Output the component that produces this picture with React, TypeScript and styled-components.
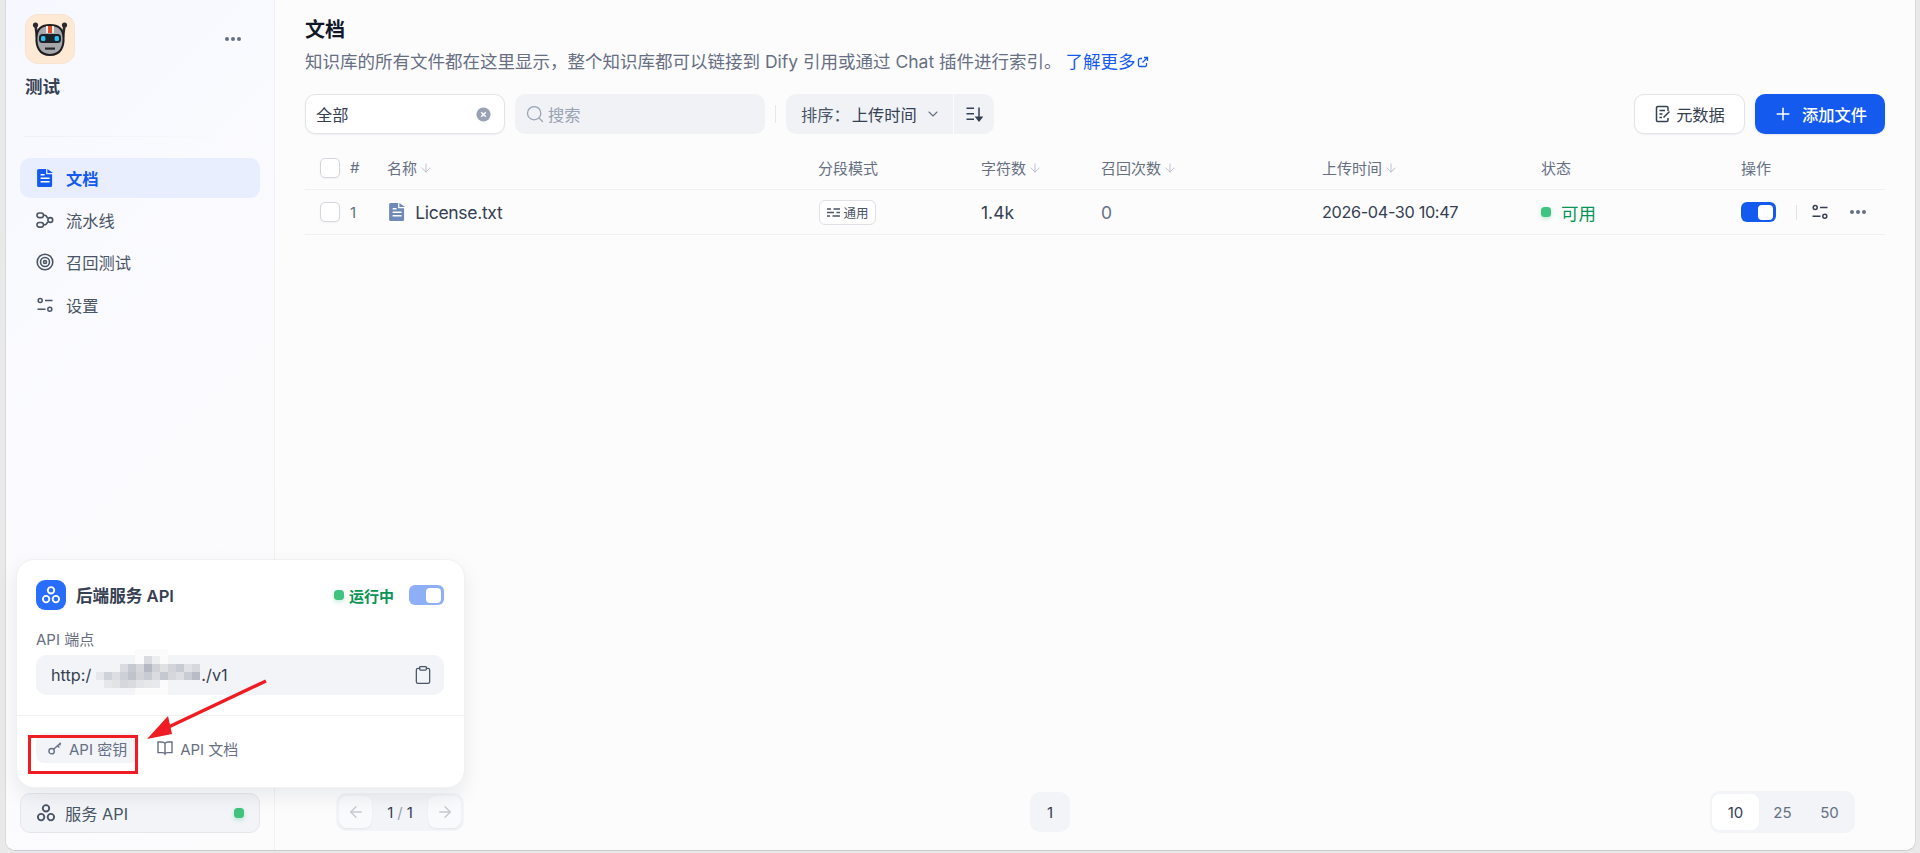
import React from "react";
import styled, { createGlobalStyle } from "styled-components";
import { ArrowDown, ArrowLeft, ArrowRight, ChevronDown, Clipboard, Plus, Search } from "lucide-react";

const GlobalStyle = createGlobalStyle`
  html, body {
    margin: 0;
    height: 100%;
    overflow: hidden;
    background: #e9e9ea;
  }
  * { box-sizing: border-box; }
  body {
    font-family: Inter, "Noto Sans CJK SC", sans-serif;
    color: #354052;
  }
`;

const Shell = styled.div`
  position: relative;
  width: 1920px;
  height: 853px;
  padding: 0 4px 2px 5px;
`;

const Frame = styled.div`
  display: flex;
  height: 100%;
  background: #fcfcfd;
  border-left: 1px solid #d8d9db;
  border-right: 1px solid #d8d9db;
  border-bottom: 1px solid #c9cacc;
  border-radius: 0 0 10px 10px;
  overflow: hidden;
`;

const Sidebar = styled.aside`
  width: 269px;
  flex-shrink: 0;
  display: flex;
  flex-direction: column;
  padding: 14px 14px 17px;
  border-right: 1px solid #f0f1f3;
  background: linear-gradient(135deg, #f7f8ff 0%, #fbfbfe 55%, #fcfcfd 100%);
`;

const AppHead = styled.div`
  display: flex;
  justify-content: space-between;
  padding-left: 5px;
`;

const Logo = styled.div`
  width: 50px;
  height: 50px;
  border-radius: 13px;
  border: 1px solid #f7e3cf;
  background: #fee9d4;
  display: flex;
  align-items: center;
  justify-content: center;
`;

const MoreBtn = styled.div`
  display: flex;
  gap: 2px;
  margin: 23px 19px 0 0;
`;

const Dot = styled.i`
  width: 4px;
  height: 4px;
  border-radius: 50%;
  background: #676f83;
`;

const AppName = styled.div`
  margin: 13px 0 0 5px;
  font-size: 17.5px;
  line-height: 20px;
  font-weight: 700;
  color: #354052;
`;

const SideRule = styled.div`
  margin: 39px 30px 21px 5px;
  height: 1px;
  background: linear-gradient(90deg, #eff0f3, rgba(239, 240, 243, 0));
`;

const Nav = styled.nav`
  display: flex;
  flex-direction: column;
  gap: 2.2px;
`;

const NavItem = styled.div<{ $active?: boolean }>`
  height: 40px;
  display: flex;
  align-items: center;
  gap: 12px;
  padding-left: 16px;
  border-radius: 10px;
  font-size: 16.25px;
  font-weight: ${(p) => (p.$active ? 600 : 400)};
  color: ${(p) => (p.$active ? "#155aef" : "#495464")};
  background: ${(p) => (p.$active ? "#e8eefd" : "transparent")};
`;

const NavIcon = styled.span`
  width: 18px;
  display: inline-flex;
  justify-content: center;
`;

const ServiceBtn = styled.div`
  margin-top: auto;
  height: 40px;
  display: flex;
  align-items: center;
  gap: 9px;
  padding: 0 15px;
  border: 1px solid #e4e6ea;
  border-radius: 10px;
  background: #f2f4f7;
  font-size: 16.25px;
  color: #495464;
`;

const Grow = styled.span`
  flex: 1;
`;

const StatusDot = styled.i`
  width: 10px;
  height: 10px;
  border-radius: 3.5px;
  background: #3fc37f;
  box-shadow: 0 2px 4px rgba(23, 178, 106, 0.25);
  flex-shrink: 0;
`;

const Main = styled.main`
  flex: 1;
  min-width: 0;
  display: flex;
  flex-direction: column;
  padding: 0 30px 17px 30px;
`;

const Title = styled.h1`
  margin: 18px 0 0;
  font-size: 20px;
  line-height: 24px;
  font-weight: 700;
  color: #101828;
`;

const Subtitle = styled.p`
  margin: 9px 0 0;
  font-size: 17.5px;
  line-height: 22px;
  color: #676f83;
  display: flex;
  align-items: center;
`;

const LearnMore = styled.span`
  color: #155aef;
  margin-left: 4px;
  display: inline-flex;
  align-items: center;
  gap: 1px;
`;

const Toolbar = styled.div`
  display: flex;
  align-items: center;
  margin-top: 21px;
  height: 40px;
`;

const FilterBox = styled.div`
  width: 200px;
  height: 40px;
  display: flex;
  align-items: center;
  justify-content: space-between;
  padding: 0 13px 0 10px;
  background: #fff;
  border: 1px solid #e2e4e8;
  border-radius: 10px;
  box-shadow: 0 1px 2px rgba(16, 24, 40, 0.05);
  font-size: 16.25px;
  color: #354052;
`;

const SearchBox = styled.div`
  width: 250px;
  height: 40px;
  margin-left: 10px;
  display: flex;
  align-items: center;
  gap: 3px;
  padding-left: 10px;
  border-radius: 10px;
  background: #f0f2f6;
  font-size: 16.25px;
  color: #98a2b2;
`;

const ToolSep = styled.div`
  width: 1px;
  height: 18px;
  margin: 0 10px;
  background: #e5e7eb;
`;

const SortGroup = styled.div`
  width: 208px;
  height: 40px;
  display: flex;
  border-radius: 10px;
  overflow: hidden;
  background: #f0f2f6;
`;

const SortLabel = styled.div`
  flex: 1;
  display: flex;
  align-items: center;
  padding-left: 15px;
  font-size: 16.25px;
  color: #495464;
  border-right: 1px solid #fcfcfd;
  white-space: nowrap;
`;

const SortValue = styled.span`
  margin-left: 2px;
  color: #354052;
`;

const SortChevron = styled(ChevronDown)`
  margin-left: 8px;
`;

const SortIcon = styled.div`
  width: 40px;
  display: flex;
  align-items: center;
  justify-content: center;
`;

const ToolActions = styled.div`
  margin-left: auto;
  display: flex;
  gap: 10px;
`;

const MetaBtn = styled.div`
  width: 111px;
  height: 40px;
  display: flex;
  align-items: center;
  justify-content: center;
  gap: 4px;
  background: #fff;
  border: 1px solid #e2e4e8;
  border-radius: 10px;
  box-shadow: 0 1px 2px rgba(16, 24, 40, 0.05);
  font-size: 16.25px;
  color: #354052;
`;

const AddBtn = styled.div`
  width: 130px;
  height: 40px;
  display: flex;
  align-items: center;
  justify-content: center;
  gap: 9px;
  background: #155aef;
  border-radius: 10px;
  box-shadow: 0 1px 2px rgba(16, 24, 40, 0.1);
  font-size: 16.25px;
  font-weight: 500;
  color: #fff;
`;

const columns = "45px 37px 431px 163px 120px 221px 219px 200px 144px";

const HeadRow = styled.div`
  display: grid;
  grid-template-columns: ${columns};
  align-items: center;
  margin-top: 13px;
  height: 43px;
  padding-bottom: 1px;
  border-bottom: 1px solid #f0f1f3;
  font-size: 15px;
  color: #676f83;
`;

const BodyRow = styled.div`
  display: grid;
  grid-template-columns: ${columns};
  align-items: center;
  height: 45px;
  border-bottom: 1px solid #f0f1f3;
  font-size: 17.5px;
  color: #354052;
`;

const CheckCell = styled.div`
  padding-left: 15px;
`;

const Checkbox = styled.div`
  width: 20px;
  height: 20px;
  border: 1px solid #d4d7dd;
  border-radius: 5px;
  background: #fff;
  box-shadow: 0 1px 2px rgba(16, 24, 40, 0.05);
`;

const HeadCell = styled.div`
  display: flex;
  align-items: center;
  gap: 2px;
  white-space: nowrap;
`;

const IndexCell = styled.div`
  font-size: 15px;
  color: #676f83;
`;

const NameCell = styled.div`
  display: flex;
  align-items: center;
  gap: 10px;
  padding-left: 2px;
  letter-spacing: -0.3px;
`;

const ModeBadge = styled.div`
  width: 57px;
  height: 25px;
  margin-left: 1px;
  display: flex;
  align-items: center;
  justify-content: center;
  gap: 2px;
  background: #fff;
  border: 1px solid #dfe1e6;
  border-radius: 6px;
  font-size: 12.5px;
  color: #495464;
`;

const CountCell = styled.div<{ $muted?: boolean }>`
  color: ${(p) => (p.$muted ? "#676f83" : "#354052")};
`;

const DateCell = styled.div`
  font-size: 16.25px;
  letter-spacing: -0.35px;
`;

const StateCell = styled.div`
  display: flex;
  align-items: center;
  gap: 10px;
  color: #079455;
`;

const ActionCell = styled.div`
  display: flex;
  align-items: center;
`;

const Toggle = styled.div<{ $dim?: boolean }>`
  width: 35px;
  height: 20px;
  flex-shrink: 0;
  display: flex;
  align-items: center;
  justify-content: flex-end;
  padding-right: 3px;
  border-radius: 6px;
  background: ${(p) => (p.$dim ? "#8eaef6" : "#155aef")};
`;

const Thumb = styled.i`
  width: 15px;
  height: 15px;
  border-radius: 4px;
  background: #fff;
`;

const ActionSep = styled.div`
  width: 1px;
  height: 15px;
  margin: 0 15px 0 20px;
  background: #e1e3e7;
`;

const RowMore = styled(MoreBtn)`
  margin: 0 0 0 22px;
`;

const Pager = styled.div`
  margin-top: auto;
  display: flex;
  align-items: center;
`;

const PrevNext = styled.div`
  width: 128px;
  height: 38px;
  margin-left: 31px;
  display: flex;
  align-items: center;
  justify-content: space-between;
  padding: 0 3px;
  border-radius: 10px;
  background: #f2f4f7;
  font-size: 15px;
  color: #354052;
`;

const PageArrow = styled.div`
  width: 33px;
  height: 32px;
  display: flex;
  align-items: center;
  justify-content: center;
  border-radius: 8px;
  background: #f9fafb;
  box-shadow: 0 1px 2px rgba(16, 24, 40, 0.06);
`;

const Slash = styled.span`
  color: #98a2b2;
  margin: 0 4px;
`;

const PageOne = styled.div`
  width: 40px;
  height: 40px;
  margin-left: 566px;
  display: flex;
  align-items: center;
  justify-content: center;
  border-radius: 10px;
  background: #f2f4f7;
  font-size: 15px;
  color: #354052;
`;

const SizeGroup = styled.div`
  margin-left: auto;
  margin-right: 30px;
  width: 145px;
  height: 42px;
  display: flex;
  align-items: center;
  padding: 0 2px;
  border-radius: 10px;
  background: #f2f4f7;
`;

const SizeItem = styled.div<{ $active?: boolean }>`
  flex: 1;
  height: 36px;
  display: flex;
  align-items: center;
  justify-content: center;
  border-radius: 8px;
  font-size: 15px;
  color: ${(p) => (p.$active ? "#354052" : "#676f83")};
  background: ${(p) => (p.$active ? "#fff" : "transparent")};
`;

const Popup = styled.section`
  position: absolute;
  left: 16px;
  top: 559px;
  width: 449px;
  height: 229px;
  display: flex;
  flex-direction: column;
  background: #fff;
  border-radius: 18px;
  border: 1px solid #f0f1f3;
  box-shadow: 0 8px 20px rgba(16, 24, 40, 0.08);
  z-index: 2;
`;

const PopupBody = styled.div`
  padding: 20px 20px 20px 19px;
  border-bottom: 1px solid #f0f1f3;
`;

const PopupHead = styled.div`
  display: flex;
  align-items: center;
`;

const ServiceIcon = styled.div`
  width: 30px;
  height: 30px;
  border-radius: 9px;
  background: #296dff;
  display: flex;
  align-items: center;
  justify-content: center;
`;

const PopupTitle = styled.div`
  margin-left: 10px;
  flex: 1;
  font-size: 16.6px;
  font-weight: 600;
  color: #354052;
`;

const Running = styled.div`
  display: flex;
  align-items: center;
  gap: 5px;
  margin-right: 15px;
  font-size: 15px;
  font-weight: 600;
  color: #079455;
`;

const FieldLabel = styled.div`
  margin-top: 20px;
  font-size: 15px;
  line-height: 20px;
  color: #676f83;
`;

const Endpoint = styled.div`
  position: relative;
  margin-top: 5px;
  height: 40px;
  display: flex;
  align-items: center;
  justify-content: space-between;
  padding: 0 11px 0 15px;
  border-radius: 10px;
  background: #f2f4f7;
  font-size: 16.25px;
  color: #354052;
`;

const HiddenHost = styled.span`
  display: inline-block;
  width: 110px;
`;

const Mosaic = styled.svg`
  position: absolute;
  left: 54px;
  top: -6px;
`;

const PopupFoot = styled.div`
  display: flex;
  align-items: center;
  gap: 6px;
  padding: 17px 19px 0;
`;

const FootBtn = styled.div<{ $hover?: boolean }>`
  height: 30px;
  display: flex;
  align-items: center;
  gap: 7px;
  padding: 0 12px;
  border-radius: 8px;
  font-size: 15px;
  color: #676f83;
  background: ${(p) => (p.$hover ? "#f2f4f7" : "transparent")};
`;

const RedBox = styled.div`
  position: absolute;
  left: 28px;
  top: 735px;
  width: 110px;
  height: 39px;
  border: 3px solid #ef1c24;
  z-index: 3;
`;

const RedArrow = styled.svg`
  position: absolute;
  left: 140px;
  top: 670px;
  z-index: 3;
`;

const ServiceGlyph = ({ size, color }: { size: number; color: string }) => (
  <svg width={size} height={size} viewBox="0 0 18 18" fill="none" stroke={color} strokeWidth="1.7">
    <circle cx="9" cy="4.8" r="2.9" />
    <circle cx="4.6" cy="12.7" r="2.9" />
    <circle cx="13.4" cy="12.7" r="2.9" />
  </svg>
);

const DocGlyph = ({ color, size = 18 }: { color: string; size?: number }) => (
  <svg width={size * 0.9} height={size} viewBox="0 0 16 18" fill={color}>
    <path d="M1.5 0H9v5.2h6V16.5a1.5 1.5 0 0 1-1.5 1.5h-12A1.5 1.5 0 0 1 0 16.5v-15A1.5 1.5 0 0 1 1.5 0Z" />
    <path d="M10.3 0 16 4h-5.7Z" />
    <path d="M3.5 8.5h9v1.5h-9ZM3.5 12h9v1.5h-9ZM3.5 5h4v1.5h-4Z" fill="#fff" />
  </svg>
);

const SettingsGlyph = ({ color = "#495464" }: { color?: string }) => (
  <svg width="16" height="16" viewBox="0 0 16 16" fill="none" stroke={color} strokeWidth="1.5">
    <circle cx="3.2" cy="3.6" r="2" />
    <circle cx="12.8" cy="12.2" r="2" />
    <path d="M8 3.6h7.5M0.5 12.2h8" />
  </svg>
);

const PipelineGlyph = () => (
  <svg width="18" height="18" viewBox="0 0 18 18" fill="none" stroke="#495464" strokeWidth="1.6">
    <rect x="1" y="2" width="6.5" height="4.6" rx="2.3" />
    <rect x="1" y="11.5" width="6.5" height="4.6" rx="2.3" />
    <circle cx="14.3" cy="9" r="2.4" />
    <path d="M7.5 4.3h1.2c1.2 0 2 .8 3 3M7.5 13.8h1.2c1.2 0 2-.8 3-3" />
  </svg>
);

const TargetGlyph = () => (
  <svg width="18" height="18" viewBox="0 0 18 18" fill="none" stroke="#495464" strokeWidth="1.6">
    <circle cx="9" cy="9" r="7.8" />
    <circle cx="9" cy="9" r="4.5" />
    <circle cx="9" cy="9" r="1.5" />
  </svg>
);

const KeyGlyph = () => (
  <svg width="14" height="14" viewBox="0 0 14 14" fill="none" stroke="#676f83" strokeWidth="1.4">
    <circle cx="3.6" cy="10.2" r="2.7" />
    <path d="M5.6 8.3 12.8 1.8M9.6 4.7l1.7 1.7M11.4 3.1l1.2 1.2" />
  </svg>
);

const BookGlyph = () => (
  <svg width="16" height="16" viewBox="0 0 16 16" fill="none" stroke="#676f83" strokeWidth="1.4">
    <path d="M8 3.4C7.2 2.4 6.2 2 5 2H1v10.6h4.6c1.2 0 2 .5 2.4 1.4.4-.9 1.2-1.4 2.4-1.4H15V2h-4c-1.2 0-2.2.4-3 1.4ZM8 3.4V14" />
  </svg>
);

const RobotLogo = () => (
  <svg width="36" height="36" viewBox="0 0 36 36">
    <circle cx="3.5" cy="4" r="2.6" fill="#2a2a2e" />
    <circle cx="32.5" cy="4" r="2.6" fill="#2a2a2e" />
    <path d="M3.5 4 5 16M32.5 4 31 16" stroke="#2a2a2e" strokeWidth="2.6" />
    <path d="M18 4c8 0 13 4 13.5 12 .6 9-2.5 18-13.5 18S3.9 25 4.5 16C5 8 10 4 18 4Z" fill="#a5a7ab" stroke="#1e1e22" strokeWidth="2" />
    <rect x="14" y="5" width="8" height="7" fill="#eceded" />
    <rect x="16" y="5" width="4" height="7" fill="#e4481f" />
    <rect x="7" y="13" width="22" height="9" rx="3.5" fill="#1c2029" />
    <rect x="9" y="15" width="4.4" height="5" rx="1.5" fill="#2bc2ee" />
    <rect x="22.6" y="15" width="4.4" height="5" rx="1.5" fill="#2bc2ee" />
    <rect x="13" y="26.5" width="10" height="2.2" fill="#26282d" />
  </svg>
);

// blurred host name, 8px blocks; x/y are where each run starts inside the svg
const mosaicRows: [number, number, string[]][] = [
  [54, 7, ["#d9dbe1", "#eceef0"]],
  [30, 15, ["#d9dbe0", "#c6c9d1", "#d5d7dd", "#b5b9c3", "#d0d2d8", "#dfe1e5", "#d2d4da", "#c9cbd3", "#dfe1e6", "#d6d8de"]],
  [6, 23, ["#e5e7ea", "#d0d2d9", "#dcdee2", "#cdd0d7", "#c0c3cc", "#d1d3d9", "#c8cbd2", "#d9dbe0", "#c5c8d0", "#d5d7dd", "#dcdee3", "#c9ccd3", "#b9bcc6"]],
  [14, 31, ["#e6e7ea", "#e2e3e7", "#d5d7dc", "#d9dbdf", "#e2e4e7", "#e6e8ea", "#e8e9ec"]],
];

export default function App() {
  const sortArrow = <ArrowDown size={14} color="#b6bcc7" strokeWidth={1.5} />;
  return (
    <>
      <GlobalStyle />
      <Shell>
        <Frame>
          <Sidebar>
            <AppHead>
              <Logo>
                <RobotLogo />
              </Logo>
              <MoreBtn>
                <Dot />
                <Dot />
                <Dot />
              </MoreBtn>
            </AppHead>
            <AppName>测试</AppName>
            <SideRule />
            <Nav>
              <NavItem $active>
                <NavIcon>
                  <DocGlyph color="#155aef" />
                </NavIcon>
                文档
              </NavItem>
              <NavItem>
                <PipelineGlyph />
                流水线
              </NavItem>
              <NavItem>
                <TargetGlyph />
                召回测试
              </NavItem>
              <NavItem>
                <NavIcon>
                  <SettingsGlyph />
                </NavIcon>
                设置
              </NavItem>
            </Nav>
            <ServiceBtn>
              <ServiceGlyph size={20} color="#495464" />
              服务 API
              <Grow />
              <StatusDot />
            </ServiceBtn>
          </Sidebar>
          <Main>
            <Title>文档</Title>
            <Subtitle>
              知识库的所有文件都在这里显示，整个知识库都可以链接到 Dify 引用或通过 Chat 插件进行索引。
              <LearnMore>
                了解更多
                <svg width="12" height="12" viewBox="0 0 12 12" fill="none" stroke="#155aef" strokeWidth="1.3">
                  <path d="M5 2.5H2.8a1.3 1.3 0 0 0-1.3 1.3v5.4A1.3 1.3 0 0 0 2.8 10.5h5.4a1.3 1.3 0 0 0 1.3-1.3V7M7 1.5h3.5V5M10.3 1.7 5.5 6.5" />
                </svg>
              </LearnMore>
            </Subtitle>
            <Toolbar>
              <FilterBox>
                全部
                <svg width="15" height="15" viewBox="0 0 15 15">
                  <circle cx="7.5" cy="7.5" r="7" fill="#98a2b2" />
                  <path d="M5.2 5.2l4.6 4.6M9.8 5.2l-4.6 4.6" stroke="#fff" strokeWidth="1.4" />
                </svg>
              </FilterBox>
              <SearchBox>
                <Search size={20} color="#98a2b2" strokeWidth={1.5} />
                搜索
              </SearchBox>
              <ToolSep />
              <SortGroup>
                <SortLabel>
                  排序：
                  <SortValue>上传时间</SortValue>
                  <SortChevron size={16} color="#676f83" strokeWidth={1.6} />
                </SortLabel>
                <SortIcon>
                  <svg width="18" height="18" viewBox="0 0 18 18" fill="none" stroke="#354052" strokeWidth="1.5">
                    <path d="M1.5 3.2h7.5M1.5 8.7h7.5M1.5 14.2h7.5M14 2.5v12.5" />
                    <path d="M11.2 12.2h5.6L14 15.8Z" fill="#354052" />
                  </svg>
                </SortIcon>
              </SortGroup>
              <ToolActions>
                <MetaBtn>
                  <svg width="18" height="18" viewBox="0 0 18 18" fill="none" stroke="#354052" strokeWidth="1.5">
                    <path d="M14 6V2.8A1.3 1.3 0 0 0 12.7 1.5H3.8a1.3 1.3 0 0 0-1.3 1.3v12.4a1.3 1.3 0 0 0 1.3 1.3h8.9a1.3 1.3 0 0 0 1.3-1.3V13" />
                    <path d="M5.5 5.5h5.5M5.5 9h3M5.5 12.5h2.5M9.5 12.5l6-6" />
                  </svg>
                  元数据
                </MetaBtn>
                <AddBtn>
                  <Plus size={20} color="#fff" strokeWidth={1.8} />
                  添加文件
                </AddBtn>
              </ToolActions>
            </Toolbar>
            <HeadRow>
              <CheckCell>
                <Checkbox />
              </CheckCell>
              <HeadCell>#</HeadCell>
              <HeadCell>名称 {sortArrow}</HeadCell>
              <HeadCell>分段模式</HeadCell>
              <HeadCell>字符数 {sortArrow}</HeadCell>
              <HeadCell>召回次数 {sortArrow}</HeadCell>
              <HeadCell>上传时间 {sortArrow}</HeadCell>
              <HeadCell>状态</HeadCell>
              <HeadCell>操作</HeadCell>
            </HeadRow>
            <BodyRow>
              <CheckCell>
                <Checkbox />
              </CheckCell>
              <IndexCell>1</IndexCell>
              <NameCell>
                <DocGlyph color="#6f8ab8" />
                License.txt
              </NameCell>
              <div>
                <ModeBadge>
                  <svg width="15" height="15" viewBox="0 0 15 15" fill="none" stroke="#495464" strokeWidth="1.3">
                    <path d="M1 4h4M7.5 4h6.5M1 7.5h7M10.5 7.5H14M1 11h3M6.5 11H14" />
                  </svg>
                  通用
                </ModeBadge>
              </div>
              <CountCell>1.4k</CountCell>
              <CountCell $muted>0</CountCell>
              <DateCell>2026-04-30 10:47</DateCell>
              <StateCell>
                <StatusDot />
                可用
              </StateCell>
              <ActionCell>
                <Toggle>
                  <Thumb />
                </Toggle>
                <ActionSep />
                <SettingsGlyph color="#354052" />
                <RowMore>
                  <Dot />
                  <Dot />
                  <Dot />
                </RowMore>
              </ActionCell>
            </BodyRow>
            <Pager>
              <PrevNext>
                <PageArrow>
                  <ArrowLeft size={18} color="#c3c8d1" strokeWidth={1.8} />
                </PageArrow>
                <span>
                  1<Slash>/</Slash>1
                </span>
                <PageArrow>
                  <ArrowRight size={18} color="#c3c8d1" strokeWidth={1.8} />
                </PageArrow>
              </PrevNext>
              <PageOne>1</PageOne>
              <SizeGroup>
                <SizeItem $active>10</SizeItem>
                <SizeItem>25</SizeItem>
                <SizeItem>50</SizeItem>
              </SizeGroup>
            </Pager>
          </Main>
        </Frame>
        <Popup>
          <PopupBody>
            <PopupHead>
              <ServiceIcon>
                <ServiceGlyph size={20} color="#fff" />
              </ServiceIcon>
              <PopupTitle>后端服务 API</PopupTitle>
              <Running>
                <StatusDot />
                运行中
              </Running>
              <Toggle $dim>
                <Thumb />
              </Toggle>
            </PopupHead>
            <FieldLabel>API 端点</FieldLabel>
            <Endpoint>
              <span>
                http:/
                <HiddenHost />
                ./v1
              </span>
              <Mosaic width="125" height="52">
                <rect x="45" y="0" width="33" height="46" fill="#fbfbfc" />
                {mosaicRows.map(([x0, y, cells]) =>
                  cells.map((c, i) => <rect key={`${y}-${i}`} x={x0 + i * 8} y={y} width="8" height="8" fill={c} />)
                )}
              </Mosaic>
              <Clipboard size={20} color="#495464" strokeWidth={1.5} />
            </Endpoint>
          </PopupBody>
          <PopupFoot>
            <FootBtn $hover>
              <KeyGlyph />
              API 密钥
            </FootBtn>
            <FootBtn>
              <BookGlyph />
              API 文档
            </FootBtn>
          </PopupFoot>
        </Popup>
        <RedBox />
        <RedArrow width="130" height="80" viewBox="0 0 130 80">
          <path d="M126 11 18 62" stroke="#ef1c24" strokeWidth="3.4" fill="none" />
          <path d="M7 69 28 46 32 64Z" fill="#ef1c24" />
        </RedArrow>
      </Shell>
    </>
  );
}
